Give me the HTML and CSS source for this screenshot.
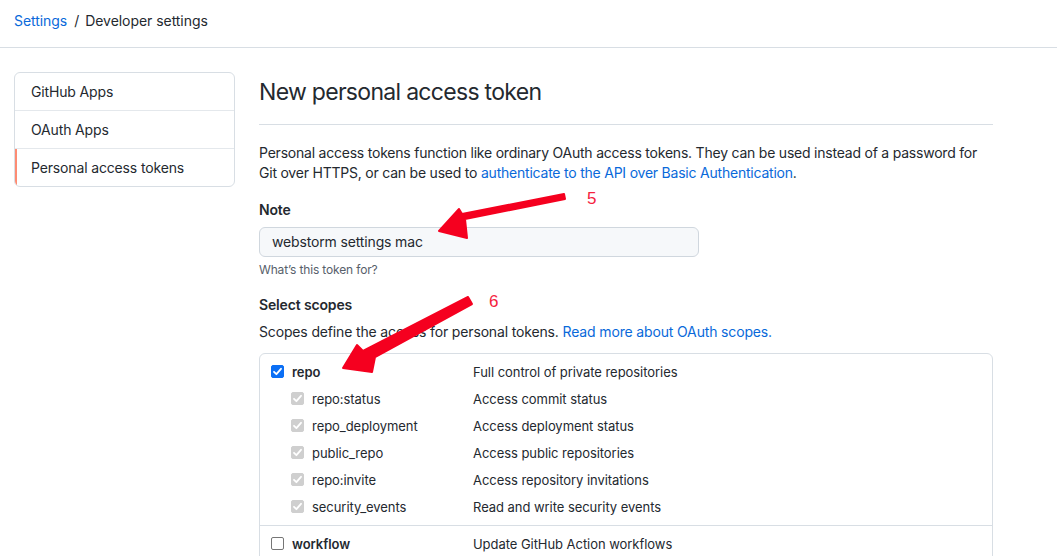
FILE: index.html
```html
<!DOCTYPE html>
<html lang="en">
<head>
<meta charset="utf-8">
<link rel="stylesheet" href="styles.css">
</head>
<body>
<header class="crumbs">
  <a href="#" class="link">Settings</a><span class="sep">/</span><span class="current">Developer settings</span>
</header>
<div class="layout">
  <nav class="menu">
    <a class="menu-item" href="#">GitHub Apps</a>
    <a class="menu-item" href="#">OAuth Apps</a>
    <a class="menu-item selected" href="#">Personal access tokens</a>
  </nav>
  <main class="main">
    <h2 class="title">New personal access token</h2>
    <p class="intro">Personal access tokens function like ordinary OAuth access tokens. They can be used instead of a password for Git over HTTPS, or can be used to <a href="#" class="link">authenticate to the API over Basic Authentication</a>.</p>
    <label class="label">Note</label>
    <div class="input">webstorm settings mac</div>
    <p class="hint">What’s this token for?</p>
    <label class="label label-scopes">Select scopes</label>
    <p class="scopes-desc">Scopes define the access for personal tokens. <a href="#" class="link">Read more about OAuth scopes.</a></p>
    <div class="scopes">
      <div class="group">
        <div class="row">
          <div class="name top"><span class="cb checked"><svg viewBox="0 0 13 13" width="13" height="13"><path d="M3 6.8 5.4 9.2 10 3.8" fill="none" stroke="#fff" stroke-width="1.8" stroke-linecap="round" stroke-linejoin="round"/></svg></span><b>repo</b></div>
          <div class="desc">Full control of private repositories</div>
        </div>
        <div class="row sub">
          <div class="name"><span class="cb disabled"><svg viewBox="0 0 13 13" width="13" height="13"><path d="M3 6.8 5.4 9.2 10 3.8" fill="none" stroke="#fff" stroke-width="1.8" stroke-linecap="round" stroke-linejoin="round"/></svg></span>repo:status</div>
          <div class="desc">Access commit status</div>
        </div>
        <div class="row sub">
          <div class="name"><span class="cb disabled"><svg viewBox="0 0 13 13" width="13" height="13"><path d="M3 6.8 5.4 9.2 10 3.8" fill="none" stroke="#fff" stroke-width="1.8" stroke-linecap="round" stroke-linejoin="round"/></svg></span>repo_deployment</div>
          <div class="desc">Access deployment status</div>
        </div>
        <div class="row sub">
          <div class="name"><span class="cb disabled"><svg viewBox="0 0 13 13" width="13" height="13"><path d="M3 6.8 5.4 9.2 10 3.8" fill="none" stroke="#fff" stroke-width="1.8" stroke-linecap="round" stroke-linejoin="round"/></svg></span>public_repo</div>
          <div class="desc">Access public repositories</div>
        </div>
        <div class="row sub">
          <div class="name"><span class="cb disabled"><svg viewBox="0 0 13 13" width="13" height="13"><path d="M3 6.8 5.4 9.2 10 3.8" fill="none" stroke="#fff" stroke-width="1.8" stroke-linecap="round" stroke-linejoin="round"/></svg></span>repo:invite</div>
          <div class="desc">Access repository invitations</div>
        </div>
        <div class="row sub">
          <div class="name"><span class="cb disabled"><svg viewBox="0 0 13 13" width="13" height="13"><path d="M3 6.8 5.4 9.2 10 3.8" fill="none" stroke="#fff" stroke-width="1.8" stroke-linecap="round" stroke-linejoin="round"/></svg></span>security_events</div>
          <div class="desc">Read and write security events</div>
        </div>
      </div>
      <div class="group">
        <div class="row">
          <div class="name top"><span class="cb"></span><b>workflow</b></div>
          <div class="desc">Update GitHub Action workflows</div>
        </div>
      </div>
    </div>
  </main>
</div>
<svg class="annot" width="1057" height="556" viewBox="0 0 1057 556">
  <path d="M564 194 L565 199 L465 219 L467 238 L439 231 L459 209 L462 214 Z" fill="#f5001f" stroke="#f5001f" stroke-width="2" stroke-linejoin="round"/>
  <path d="M468 297 L472 304 L375 357 L372 372 L343 368 L357 345 L363 351 Z" fill="#f5001f" stroke="#f5001f" stroke-width="2" stroke-linejoin="round"/>
  <text x="587" y="204" class="num">5</text>
  <text x="489" y="307" class="num">6</text>
</svg>
</body>
</html>
```
FILE: styles.css
```css
* { box-sizing: border-box; }
body {
  margin: 0;
  font-family: Inter, "Liberation Sans", Arial, sans-serif;
  font-size: 14px;
  line-height: 20px;
  letter-spacing: -0.15px;
  color: #24292f;
  background: #fff;
  position: relative;
  width: 1057px;
  height: 556px;
  overflow: hidden;
}
.link { color: #0969da; text-decoration: none; }
.crumbs {
  height: 48px;
  padding: 11px 14px 0;
  border-bottom: 1px solid #d8dee4;
  font-size: 14px;
  letter-spacing: -0.05px;
}
.crumbs .sep { margin: 0 6px 0 7px; color: #24292f; }
.layout {
  display: flex;
  padding: 24px 0 0 14px;
}
.menu {
  width: 221px;
  flex: none;
  border: 1px solid #d8dee4;
  border-radius: 6px;
  align-self: flex-start;
  display: flex;
  flex-direction: column;
  overflow: hidden;
}
.menu-item {
  display: block;
  height: 38px;
  padding: 9px 16px;
  color: #24292f;
  text-decoration: none;
  border-top: 1px solid #e4e8ec;
  position: relative;
}
.menu-item:first-child { border-top: 0; height: 37px; padding-top: 9px; }
.menu-item.selected { box-shadow: inset 2px 0 0 #fd8c73; }
.main {
  margin-left: 24px;
  width: 734px;
}
.title {
  margin: 0;
  font-size: 23px;
  font-weight: 400;
  line-height: 30px;
  letter-spacing: -0.7px;
  padding-top: 5px;
  padding-bottom: 17px;
  border-bottom: 1px solid #d8dee4;
}
.intro { margin: 18px 0 0; letter-spacing: -0.22px; }
.label {
  display: block;
  font-weight: 600;
  margin-top: 17px;
}
.input {
  margin-top: 7px;
  width: 440px;
  height: 30px;
  border: 1px solid #d0d7de;
  border-radius: 6px;
  background: #f6f8fa;
  padding: 4px 12px;
  font-size: 14px;
}
.hint {
  margin: 4px 0 0;
  font-size: 12px;
  color: #57606a;
  line-height: 18px;
}
.label-scopes { margin-top: 16px; }
.scopes-desc { margin: 7px 0 0; }
.scopes {
  margin-top: 11px;
  border: 1px solid #d8dee4;
  border-radius: 6px;
  border-bottom-left-radius: 0;
  border-bottom-right-radius: 0;
}
.group { padding: 4px 0 5px; }
.group + .group { border-top: 1px solid #d8dee4; padding-top: 4px; }
.row {
  display: flex;
  height: 27px;
  font-size: 13px;
  letter-spacing: -0.05px;
  align-items: center;
}
.row .name {
  width: 213px;
  flex: none;
  display: flex;
  align-items: center;
  padding-left: 11px;
}
.row.sub .name { padding-left: 31px; }
.row .name b { font-weight: 600; }
.desc { color: #24292f; }
.cb {
  width: 13px;
  height: 13px;
  border: 1px solid #767676;
  border-radius: 2px;
  display: inline-flex;
  margin-right: 8px;
  flex: none;
  background: #fff;
}
.cb svg { display: block; margin: -1px; }
.cb.checked { background: #0b6ff5; border-color: #0b6ff5; }
.cb.disabled { background: #cfcfcf; border-color: #cfcfcf; }
.annot {
  position: absolute;
  left: 0;
  top: 0;
  pointer-events: none;
}
.num {
  fill: #f5223e;
  font-family: "Liberation Sans", Arial, sans-serif;
  font-size: 17px;
}
```
